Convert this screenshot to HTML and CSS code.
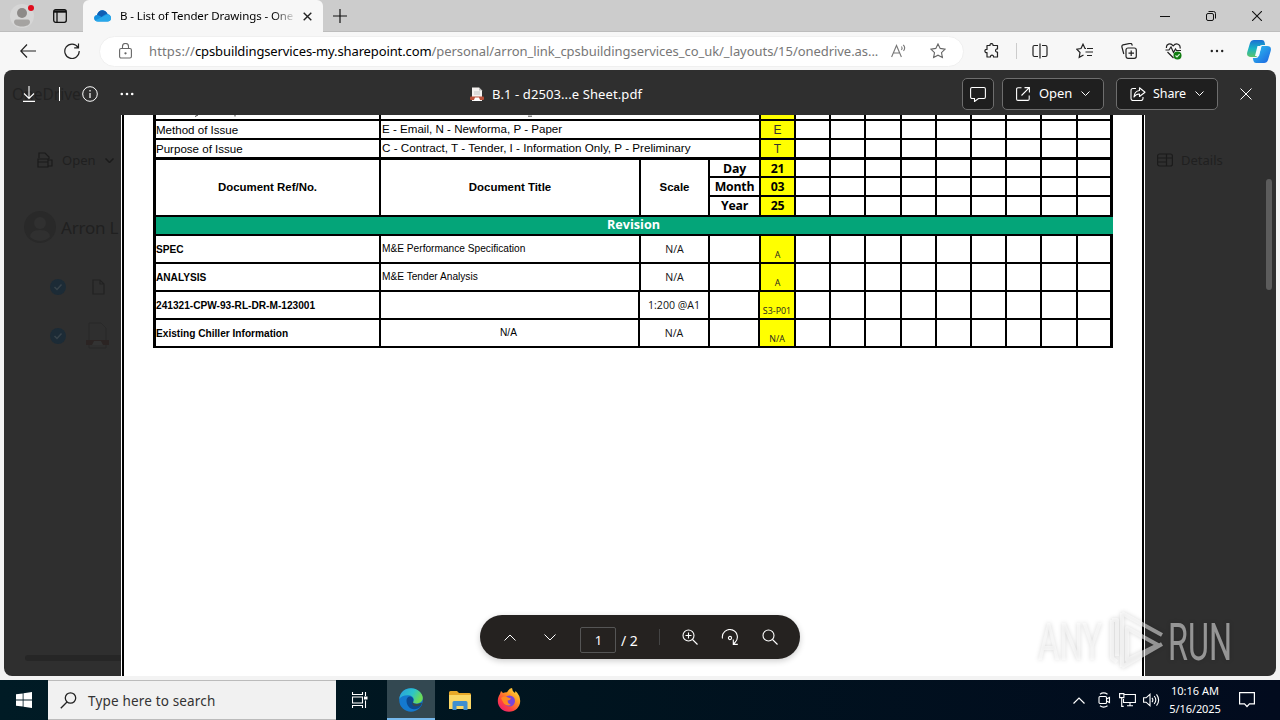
FILE: index.html
```
<!DOCTYPE html>
<html lang="en">
<head>
<meta charset="utf-8">
<title>B - List of Tender Drawings - OneDrive</title>
<link rel="stylesheet" href="styles.css">
</head>
<body>
<header class="tabstrip">
  <div class="profile"><svg width="18" height="20" viewBox="0 0 18 20"><circle cx="9" cy="6" r="5" fill="#8d8a88"/><path d="M1 15c0-2 1.500-2.500 3-2.500h10c1.500 0 3 .5 3 2.500 0 3-4 4.500-8 4.500S1 18 1 15z" fill="#a5a3a1"/></svg><i class="dot"></i></div>
  <svg class="tabs-icon" width="14" height="14" viewBox="0 0 14 14" fill="none" stroke="#111" stroke-width="1.300"><rect x=".7" y=".7" width="12.600" height="12.600" rx="2"/><path d="M1 2.500h12" stroke-width="2.400"/><path d="M4 3v10"/></svg>
  <div class="tab">
    <svg width="17" height="12" viewBox="0 0 17 12"><path d="M3 5C4 1 8-1 11 1c1.500 1 2 2 2.500 3C16 4.500 17 6 17 8c0 2-1.500 3.500-3.500 3.500H4C1.500 11.500 0 10 0 8c0-1.500 1-3 3-3z" fill="#1490df"/><path d="M3 5C4 1 8-1 11 1c1.500 1 2 2 2.500 3-3 0-4 1.500-6 3C6 6 5 5 3 5z" fill="#0f5fb4"/><path d="M1 10.500L13 4.500c3 .5 4 2 4 4 0 1.800-1.500 3-3.500 3H4c-1.300 0-2.300-.4-3-1z" fill="#28a8ea"/></svg>
    <span class="tab-title">B - List of Tender Drawings - One</span>
    <svg width="9" height="9" viewBox="0 0 9 9" stroke="#222" stroke-width="1.400"><path d="M.7.7l7.600 7.600M8.300.7L.7 8.300"/></svg>
  </div>
  <svg class="plus" width="14" height="14" viewBox="0 0 14 14" stroke="#111" stroke-width="1.200"><path d="M7 0v14M0 7h14"/></svg>
  <div class="winctl">
    <svg width="10" height="10" viewBox="0 0 10 10" stroke="#111"><path d="M0 5.500h10"/></svg>
    <svg width="10" height="10" viewBox="0 0 10 10" stroke="#111" fill="none"><rect x=".5" y="2.500" width="7" height="7" rx="1.500"/><path d="M2.500.5h5a2 2 0 0 1 2 2v5"/></svg>
    <svg width="10" height="10" viewBox="0 0 10 10" stroke="#111" stroke-width="1.100"><path d="M0 0l10 10M10 0L0 10"/></svg>
  </div>
</header>

<div class="toolbar">
  <svg class="back" width="16" height="14" viewBox="0 0 16 14" fill="none" stroke="#222" stroke-width="1.200"><path d="M7 .5L.8 7 7 13.500M1 7h15"/></svg>
  <svg class="reload" width="16" height="16" viewBox="0 0 16 16" fill="none" stroke="#222" stroke-width="1.200"><path d="M14 4.300A7.200 7.200 0 1 0 15.200 8M14.500.5v4.300h-4.300"/></svg>
  <div class="address">
    <svg width="13" height="16" viewBox="0 0 13 16" fill="none" stroke="#666" stroke-width="1.100"><rect x=".6" y="5.500" width="11.800" height="9.500" rx="1.500"/><path d="M3.500 5.500V3.500a3 3 0 0 1 6 0v2"/><circle cx="6.500" cy="10.300" r=".6" fill="#666"/></svg>
    <span class="url"><span class="scheme">https://</span><span class="host">cpsbuildingservices-my.sharepoint.com</span><span>/personal/arron_link_cpsbuildingservices_co_uk/_layouts/15/onedrive.as...</span></span>
    <svg class="read" width="16" height="14" viewBox="0 0 16 14" fill="none" stroke="#777" stroke-width="1.100"><path d="M.6 13L5.500 1.500 10.400 13M2.300 9h6.400M10.500 2.500q1.300 1.500 0 3.500M12.200.8q2.800 2.800.3 6"/></svg>
    <svg class="fav" width="16" height="16" viewBox="0 0 16 16" fill="none" stroke="#666" stroke-width="1.100"><path d="M8 .9l2.200 4.500 4.900.7-3.600 3.500.9 4.900L8 12.200l-4.400 2.300.9-4.900L.9 6.100l4.900-.7z"/></svg>
  </div>
  <div class="tools">
    <svg width="16" height="16" viewBox="0 0 16 16" fill="none" stroke="#222" stroke-width="1.200"><path d="M3 2.500h3c-.5-2.600 3.500-2.600 3 0h4.500V6c-2.600-.5-2.600 3.500 0 3v5H9.500c.5-2.600-3.500-2.600-3 0H3V9.500c-2.800.5-2.800-3.500 0-3z" stroke-linejoin="round"/></svg>
    <i class="vbar"></i>
    <svg width="16" height="16" viewBox="0 0 16 16" fill="none" stroke="#222" stroke-width="1.200"><path d="M6 2.500H2.500Q1 2.500 1 4v8q0 1.500 1.500 1.500H6M10 2.500h3.500Q15 2.500 15 4v8q0 1.500-1.500 1.500H10M8 .5v15"/></svg>
    <svg width="17" height="16" viewBox="0 0 17 16" fill="none" stroke="#222" stroke-width="1.200"><path d="M10 5.500H9L7 1.200 5 5.500l-4.300.7L4 9.500l-.8 4.800L7.500 12M11 5.500h6M9.500 9h7.500M11 12.500h5"/></svg>
    <svg width="16" height="16" viewBox="0 0 16 16" fill="none" stroke="#222" stroke-width="1.200"><rect x="5" y="5" width="10.300" height="10.300" rx="2"/><path d="M10.200 7.500v5.500M7.500 10.200H13M2.800 11L.9 4Q.6 2.300 2 1.900l7-1.500q1.500-.2 2 1.200l.3 1"/></svg>
    <svg width="17" height="17" viewBox="0 0 17 17" fill="none" stroke="#222" stroke-width="1.200"><path d="M.5 7H4l2-3 2.500 5.500L10.500 6l1 1.500H16M1.500 5C.8 1 5.500-.5 8.200 2.800 11-.5 16 1 15 5.500M2.500 9l6 6"/><circle cx="12.500" cy="12.500" r="4" fill="#107c10" stroke="none"/><path d="M10.500 12.500l1.500 1.400 2.600-2.700" stroke="#d9f2d9"/></svg>
    <svg width="14" height="4" viewBox="0 0 14 4" fill="#222"><circle cx="1.800" cy="2" r="1.200"/><circle cx="7" cy="2" r="1.200"/><circle cx="12.200" cy="2" r="1.200"/></svg>
    <svg class="copilot" width="24" height="23" viewBox="0 0 24 23"><defs><linearGradient id="ca" x1="0" y1="0" x2="0" y2="1"><stop offset="0" stop-color="#1a6fd4"/><stop offset=".5" stop-color="#18b3c4"/><stop offset="1" stop-color="#5cc46a"/></linearGradient><linearGradient id="cb" x1="0" y1="0" x2="1" y2="1"><stop offset="0" stop-color="#2ec6f0"/><stop offset="1" stop-color="#1d62e0"/></linearGradient></defs><path d="M7 0h8q2 0 2.500 2l.7 3H15q-2 0-2.700 2L9.500 17H4q-5 0-3.700-5L3 3Q4 0 7 0z" fill="url(#ca)"/><path d="M17 23H9q-2 0-2.500-2l-.7-3H9q2 0 2.700-2L14.500 6H20q5 0 3.700 5L21 20q-1 3-4 3z" fill="url(#cb)"/><path d="M10.500 6h4L12 16H8z" fill="#f4fbff"/></svg>
  </div>
</div>

<main class="viewer">
  <div class="viewer-bar">
    <span class="ghost brand">OneDrive</span>
    <div class="bar-left">
      <svg width="12" height="16" viewBox="0 0 12 16" fill="none" stroke="#fff" stroke-width="1.100"><path d="M6 0v12.500M1 7.500l5 5 5-5M0 15.400h12"/></svg>
      <i class="sep"></i>
      <svg width="16" height="16" viewBox="0 0 16 16" fill="none" stroke="#fff"><circle cx="8" cy="8" r="7.300"/><path d="M8 7v5M8 4v1.500" stroke-width="1.200"/></svg>
      <svg width="14" height="4" viewBox="0 0 14 4" fill="#fff"><circle cx="1.800" cy="2" r="1.300"/><circle cx="7" cy="2" r="1.300"/><circle cx="12.200" cy="2" r="1.300"/></svg>
    </div>
    <div class="filename">
      <svg width="14" height="15" viewBox="0 0 14 15"><path d="M2 .5h7l3 3V14H2z" fill="#f4f1ef"/><path d="M9 .5v3h3z" fill="#bbb"/><path d="M4 5h6M4 7h6" stroke="#c4c4c4"/><rect y="9.500" width="14" height="3.500" rx="1" fill="#b9513a"/><path d="M3.500 14l1.500-3.500h4l1.500 3.500z" fill="#fff"/></svg>
      <span>B.1 - d2503...e Sheet.pdf</span>
    </div>
    <div class="bar-right">
      <div class="btn icon"><svg width="16" height="16" viewBox="0 0 16 16" fill="none" stroke="#fff" stroke-width="1.100"><path d="M2 1.500h12q1.400 0 1.400 1.400v8.200q0 1.400-1.400 1.400H8.500L4.500 15.500v-3H2Q.6 12.500.6 11.100V2.900Q.6 1.500 2 1.500z"/></svg></div>
      <div class="btn open"><svg width="14" height="14" viewBox="0 0 14 14" fill="none" stroke="#fff" stroke-width="1.100"><path d="M5.500.8H2Q.6.8.6 2.200V12q0 1.400 1.400 1.400h9.800q1.400 0 1.400-1.400V8.500M8.500.6h4.900v4.900M13.300.7L5.500 8.500"/></svg><span>Open</span><svg width="9" height="5" viewBox="0 0 9 5" fill="none" stroke="#fff"><path d="M.5.5l4 4 4-4"/></svg></div>
      <div class="btn share"><svg width="16" height="14" viewBox="0 0 16 14" fill="none" stroke="#fff" stroke-width="1.100"><path d="M6 1.500H3Q1 1.500 1 3.500v8q0 2 2 2h8q2 0 2-2V10M9.500.8l5.500 4.400-5.500 4.300V7Q6 6.800 4 10q.3-5.800 5.500-6.500z" stroke-linejoin="round"/></svg><span>Share</span><svg width="9" height="5" viewBox="0 0 9 5" fill="none" stroke="#fff"><path d="M.5.5l4 4 4-4"/></svg></div>
      <svg class="close" width="12" height="12" viewBox="0 0 12 12" stroke="#fff"><path d="M.5.5l11 11M11.500.5l-11 11"/></svg>
    </div>
  </div>

  <div class="stage">
    <aside class="left">
      <div class="ghost card-open"><svg width="16" height="16" viewBox="0 0 16 16" fill="none" stroke="#1b1b1b" stroke-width="1.200"><path d="M2 6V1h6l4 4v2M1 7h10v8H1zM1 10h10M11 8h4v6h-4"/></svg><span>Open</span><svg width="9" height="5" viewBox="0 0 9 5" fill="none" stroke="#1b1b1b" stroke-width="1.500"><path d="M.5.5l4 4 4-4"/></svg></div>
      <div class="ghost owner"><svg width="32" height="32" viewBox="0 0 32 32"><circle cx="16" cy="16" r="16" fill="#292929"/><circle cx="16" cy="12" r="6" fill="#303030"/><path d="M6 26q0-7 10-7t10 7q-10 8-20 0z" fill="#303030"/></svg><span>Arron L</span></div>
      <div class="file-row first"><svg width="16" height="16" viewBox="0 0 16 16" fill="none"><circle cx="8" cy="8" r="8" fill="#1c2b36"/><path d="M4.500 8l2.500 2.500 4.500-5" stroke="#38434a" stroke-width="1.500"/></svg><svg width="13" height="16" viewBox="0 0 13 16" fill="none" stroke="#222" stroke-width="1.200"><path d="M1 1h7l4 4v10H1zM8 1v4h4"/></svg></div>
      <div class="file-row"><svg width="16" height="16" viewBox="0 0 16 16" fill="none"><circle cx="8" cy="8" r="8" fill="#1c2b36"/><path d="M4.500 8l2.500 2.500 4.500-5" stroke="#38434a" stroke-width="1.500"/></svg><svg width="23" height="27" viewBox="0 0 23 27" fill="none"><path d="M3 1h12l5 5v20H3z" stroke="#292929"/><path d="M0 18h23v5H0z" fill="#2b2423"/><path d="M6 23l2-4h7l2 4z" fill="#333"/></svg></div>
      <div class="hscroll"></div>
    </aside>

    <section class="page">
      <div class="sheet">
        <div class="grid top">
          <div class="cut"><svg width="100" height="3" viewBox="0 0 100 3" stroke="#444"><path d="M42 0l-3 1.500M79 0v1.500"/></svg></div><div class="span3 cut"><svg width="200" height="3" viewBox="0 0 200 3" stroke="#555"><path d="M147 1.200h4"/></svg></div><div class="y"></div><div></div><div></div><div></div><div></div><div></div><div></div><div></div><div></div><div></div>
          <div class="big">Method of Issue</div><div class="span3 big wide">E - Email, N - Newforma, P - Paper</div><div class="y mid">E</div><div></div><div></div><div></div><div></div><div></div><div></div><div></div><div></div><div></div>
          <div class="big">Purpose of Issue</div><div class="span3 big wide contract">C - Contract, T - Tender, I - Information Only, P - Preliminary</div><div class="y mid">T</div><div></div><div></div><div></div><div></div><div></div><div></div><div></div><div></div><div></div>
        </div>
        <div class="grid dates">
          <div class="head">Document Ref/No.</div><div class="head">Document Title</div><div class="head">Scale</div>
          <div class="date">Day</div><div class="date y">21</div><div></div><div></div><div></div><div></div><div></div><div></div><div></div><div></div><div></div>
          <div class="date">Month</div><div class="date y">03</div><div></div><div></div><div></div><div></div><div></div><div></div><div></div><div></div><div></div>
          <div class="date">Year</div><div class="date y">25</div><div></div><div></div><div></div><div></div><div></div><div></div><div></div><div></div><div></div>
        </div>
        <div class="revision">Revision</div>
        <div class="grid docs">
          <div class="ref">SPEC</div><div class="title">M&amp;E Performance Specification</div><div class="scale">N/A</div><div></div><div class="y rev">A</div><div></div><div></div><div></div><div></div><div></div><div></div><div></div><div></div><div></div>
          <div class="ref">ANALYSIS</div><div class="title">M&amp;E Tender Analysis</div><div class="scale">N/A</div><div></div><div class="y rev">A</div><div></div><div></div><div></div><div></div><div></div><div></div><div></div><div></div><div></div>
          <div class="ref">241321-CPW-93-RL-DR-M-123001</div><div class="short"></div><div class="scale nudge">1:200 @A1</div><div class="short"></div><div class="y rev nudge">S3-P01</div><div></div><div></div><div></div><div></div><div></div><div></div><div></div><div></div><div></div>
          <div class="ref">Existing Chiller Information</div><div class="title center short">N/A</div><div class="scale nudge">N/A</div><div class="short"></div><div class="y rev nudge">N/A</div><div></div><div></div><div></div><div></div><div></div><div></div><div></div><div></div><div></div>
        </div>
      </div>
    </section>

    <aside class="right">
      <div class="ghost details"><svg width="16" height="14" viewBox="0 0 16 14" fill="none" stroke="#1b1b1b" stroke-width="1.200"><rect x=".6" y="1" width="14.800" height="12" rx="2"/><path d="M9.500 1v12M1 5h14M1 9h8"/></svg><span>Details</span></div>
      <div class="vscroll"></div>
    </aside>
  </div>

  <div class="pill">
    <svg width="12" height="7" viewBox="0 0 12 7" fill="none" stroke="#fff"><path d="M.5 6.500L6 1l5.500 5.500"/></svg>
    <svg width="12" height="7" viewBox="0 0 12 7" fill="none" stroke="#fff"><path d="M.5.5L6 6 11.500.5"/></svg>
    <span class="pageno">1</span><span class="total">/ 2</span><i class="psep"></i>
    <svg width="16" height="16" viewBox="0 0 16 16" fill="none" stroke="#fff" stroke-width="1.100"><circle cx="6.500" cy="6.500" r="5.500"/><path d="M10.500 10.500l5 5M6.500 3.500v6M3.500 6.500h6"/></svg>
    <svg width="18" height="17" viewBox="0 0 18 17" fill="none" stroke="#fff" stroke-width="1.100"><path d="M1.500 9.500A7.500 7.500 0 1 1 14 13.500l-1.500 1.500M12.300 10.500V15.400h4.500"/><circle cx="9" cy="9" r="1.600"/></svg>
    <svg width="16" height="16" viewBox="0 0 16 16" fill="none" stroke="#fff" stroke-width="1.100"><circle cx="6.500" cy="6.500" r="5.500"/><path d="M10.500 10.500l5 5"/></svg>
  </div>
</main>

<footer class="taskbar">
  <div class="start"><svg width="16" height="16" viewBox="0 0 16 16" fill="#fff"><path d="M0 2.300L6.700 1.400v6.200H0zM7.500 1.300L16 0v7.600H7.500zM0 8.400h6.700v6.200L0 13.700zM7.500 8.400H16V16l-8.500-1.300z"/></svg></div>
  <div class="search"><svg width="17" height="17" viewBox="0 0 17 17" fill="none" stroke="#222" stroke-width="1.300"><circle cx="10.500" cy="6" r="5.200"/><path d="M7 10L.8 16.200"/></svg><span>Type here to search</span></div>
  <div class="task"><svg width="16" height="16" viewBox="0 0 16 16" fill="none" stroke="#fff" stroke-width="1.100"><path d="M.5 0v2.500h10V0M.5 16v-2.500h10V16M.5 5h10v6H.5zM13.500 0v4M13.500 8.500V16"/><path d="M12 4.500h3.500v3H12z" fill="#fff" stroke="none"/></svg></div>
  <div class="task active"><svg width="24" height="24" viewBox="0 0 24 24"><defs><linearGradient id="ea" x1="0" y1="0" x2="1" y2=".4"><stop offset="0" stop-color="#2a9de0"/><stop offset=".6" stop-color="#2cc4c8"/><stop offset="1" stop-color="#6bdb55"/></linearGradient></defs><circle cx="12" cy="12" r="11.800" fill="#1479cf"/><path d="M.3 11C1 4 6 .2 12 .2S24 5 23.800 10c-.2 4-3.500 5.500-6.800 5.500-3 0-3.500-1-2.500-2.500C15.500 11 14 7.500 9.500 7.200 5 7 1.500 8.500.3 11z" fill="url(#ea)"/><path d="M7.500 12.500c0-2 1-3.500 3-4 3 0 4.500 2.500 3.800 4.500-1 2 .2 3 3.500 3 2 0 4-.7 4.800-1.500 1 2.500-2.500 7-7.600 6.800-4.500 0-7.500-4.300-7.500-8.800z" fill="#0c4a91"/><path d="M14.300 13c-1 2 .2 3 3.500 3 2 0 4-.7 4.800-1.200.5 1-1.600 3-4.600 3.500-4 .5-6-2.300-3.700-5.300z" fill="#36474d"/></svg></div>
  <div class="task"><svg width="22" height="19" viewBox="0 0 22 19"><path d="M0 1.500Q0 0 1.500 0H8l2 2h10.500Q22 2 22 3.500V18H0z" fill="#e8a828"/><path d="M0 4h22v14H0z" fill="#fbd766"/><path d="M3.500 19V11.500Q3.500 10 5 10h12q1.500 0 1.500 1.500V19h-4v-4h-7v4z" fill="#3f8fd0"/></svg></div>
  <div class="task"><svg width="24" height="24" viewBox="0 0 24 24"><defs><linearGradient id="fa" x1="1" y1="0" x2=".2" y2="1"><stop offset="0" stop-color="#fff04a"/><stop offset=".4" stop-color="#ff9a22"/><stop offset=".75" stop-color="#ff4040"/><stop offset="1" stop-color="#e81f75"/></linearGradient></defs><path d="M3 6l1-3 2 2q2-1 4-.8Q12 .5 15 0q0 3 3 5l.5-2Q23 7 23.200 13c0 6-5 10.800-11.200 10.800S.8 19 .8 13c0-3 .8-5 2.200-7z" fill="url(#fa)"/><circle cx="12.500" cy="13" r="5.500" fill="#7a45d8"/><path d="M4 10q4-2.500 7-.5l3 1q-1 2-3.500 2 0 3 3.500 4.500Q8 18.500 6 14z" fill="#ff8a20"/></svg></div>
  <div class="tray">
    <svg width="12" height="7" viewBox="0 0 12 7" fill="none" stroke="#fff" stroke-width="1.200"><path d="M.5 6.500L6 1l5.500 5.500"/></svg>
    <svg width="13" height="16" viewBox="0 0 13 16" fill="none" stroke="#fff" stroke-width="1.100"><rect x="1" y="4.500" width="7.500" height="7" rx="1"/><path d="M8.500 7l3-1.500v5L8.500 9M2 2.200Q5.500-.5 9.500 2.200M2 13.800q3.500 2.700 7.500 0"/></svg>
    <svg width="17" height="14" viewBox="0 0 17 14" fill="none" stroke="#fff" stroke-width="1.100"><path d="M5.500 1.500h10.900v8H4.500V6M8 12.800h6M11 9.500v3M.6.600h4.300v4H.6zM2.700 4.600v8.800h2"/></svg>
    <svg width="17" height="14" viewBox="0 0 17 14" fill="none" stroke="#fff" stroke-width="1.100"><path d="M.6 4.800h2.500L7 1.300v11.400L3.100 9.200H.6zM9 4.800q1.700 2.200 0 4.400M11.200 3q3.200 4 0 8M13.500 1.300q4.300 5.700 0 11.400"/></svg>
    <div class="clock"><span>10:16 AM</span><span class="date2">5/16/2025</span></div>
    <svg class="note" width="16" height="16" viewBox="0 0 16 16" fill="none" stroke="#fff" stroke-width="1.200"><path d="M.6.600h14.800v11.200H10.500L8 14.500 5.500 11.800H.6z"/></svg>
  </div>
</footer>

<svg class="watermark" width="220" height="70" viewBox="1030 606 220 70">
  <g class="wm-text"><text x="1038" y="660" textLength="64" lengthAdjust="spacingAndGlyphs">ANY</text><text x="1168" y="660" textLength="64" lengthAdjust="spacingAndGlyphs">RUN</text></g>
  <g class="wm-logo"><path d="M1122 613v54M1122 613l40 22M1122 667l40-23M1112 620v38l5 4M1127 628l31 17-31 15zM1112 620h5v36"/></g>
</svg>
</body>
</html>
```

FILE: styles.css
```
* { box-sizing: border-box; }
body { margin: 0; width: 1280px; height: 720px; overflow: hidden; display: flex; flex-direction: column; position: relative; background: #f3f3f3; font-family: "Noto Sans", sans-serif; color: #000; }
svg { display: block; flex: none; }
span { white-space: nowrap; }

.tabstrip { height: 32px; flex: none; display: flex; align-items: center; background: #ccc; border-bottom: 1px solid #bdbdbd; }
.profile { position: relative; width: 24px; height: 24px; margin-left: 10px; padding: 3px; border-radius: 50%; background: #d6d6d6; }
.dot { position: absolute; left: 18px; top: 1px; width: 6px; height: 6px; border-radius: 50%; background: #e00b1c; }
.tabs-icon { margin-left: 19px; }
.tab { display: flex; align-items: center; width: 240px; height: 32px; margin-left: 16px; padding: 0 11px; background: #f7f7f7; border-radius: 6px 6px 0 0; align-self: flex-start; }
.tab-title { width: 174px; margin: 0 9px -1px 9px; overflow: hidden; font-size: 11.5px; letter-spacing: -.1px; background: linear-gradient(90deg, #000 88%, #ddd 100%); -webkit-background-clip: text; background-clip: text; color: transparent; }
.tab-title { padding-bottom: 2px; }
.plus { margin-left: 10px; }
.winctl { display: flex; gap: 36px; margin-left: auto; padding-right: 18px; }

.toolbar { height: 38px; flex: none; display: flex; align-items: center; background: #f7f7f7; }
.back { margin-left: 20px; }
.reload { margin-left: 28px; }
.address { display: flex; align-items: center; width: 865px; height: 31px; margin-left: 19px; padding-left: 19px; border-radius: 16px; background: #fff; border: 1px solid #f0f0f0; }
.url { width: 728px; margin-left: 17px; font-size: 13px; letter-spacing: -.05px; color: #777; }
.scheme { letter-spacing: .15px; }
.host { color: #000; letter-spacing: -.12px; }
.read { margin-left: 14px; }
.fav { margin-left: 23px; }
.tools { display: flex; align-items: center; flex: 1; padding: 0 5px 0 20px; gap: 28px; }
.vbar { width: 1px; height: 16px; margin: 0 -13px 0 -12px; background: #ccc; }
.copilot { margin-left: -5px; }

.viewer { position: relative; height: 606px; margin: 0 4px 4px; flex: none; display: flex; flex-direction: column; overflow: hidden; border-radius: 8px; background: #2f2f2f; }
.viewer-bar { position: relative; height: 45px; flex: none; display: flex; align-items: center; padding-top: 2px; font-size: 13px; color: #fff; }
.ghost { color: #202020; }
.brand { position: absolute; left: 8px; top: 13px; font-size: 15.500px; line-height: 22px; color: #222; }
.bar-left { position: relative; display: flex; align-items: center; width: 466px; padding-left: 19px; }
.sep { width: 1px; height: 14px; margin: 0 22px 0 24px; background: #fff; }
.bar-left svg:last-child { margin-left: 22px; }
.filename { display: flex; align-items: center; gap: 8px; letter-spacing: .1px; }
.filename svg { margin-top: 1px; }
.bar-right { display: flex; align-items: center; margin-left: auto; padding-right: 24px; }
.btn { display: flex; align-items: center; height: 32px; border: 1px solid #6e6e6e; border-radius: 5px; background: #1f1f1f; }
.icon { width: 32px; padding-left: 7px; }
.open { width: 102px; margin-left: 8px; padding-left: 13px; }
.share { width: 102px; margin: 0 22px 0 12px; padding-left: 13px; }
.btn span { margin: 0 9px 1px 9px; width: 33px; letter-spacing: -.1px; }
.share span { font-size: 12.500px; margin-left: 7px; }

.stage { flex: 1; display: flex; min-height: 0; }
.left { width: 117px; flex: none; display: flex; flex-direction: column; padding-left: 20px; overflow: hidden; }
.card-open { display: flex; align-items: center; gap: 9px; height: 60px; margin: 15px 0 0 -5px; padding-left: 18px; font-size: 13px; }
.owner { display: flex; align-items: center; gap: 5px; height: 32px; margin-top: 21px; font-size: 17px; letter-spacing: -.2px; }
.file-row { display: flex; align-items: center; gap: 20px; height: 49px; margin-left: 4px; padding-left: 22px; }
.file-row.first { gap: 26px; margin-top: 19px; }
.hscroll { height: 6px; margin: auto 0 15px 1px; background: #262626; flex: none; border-radius: 3px 0 0 3px; }

.page { width: 1024px; flex: none; padding: 0 31px 0 30px; background: linear-gradient(90deg, #fff 1px, #000 1px, #000 3px, #fff 3px, #fff 1021px, #000 1021px, #000 1023px, #fff 1023px); }
.sheet { width: 960px; margin-left: 2px; background: #000; font-family: "Liberation Sans", Arial, sans-serif; }
.grid { display: grid; grid-template-columns: 223px 258px 67px 49px 33px 33px 33px 34px 33px 33px 33px 33px 34px 32px; gap: 2px; padding: 0 3px; }
.grid > div { background: #fff; overflow: hidden; white-space: nowrap; }
.top { grid-template-rows: 4px 17px 17px; }
.span3 { grid-column: span 3; }
.grid > .y { background: #ff0; text-align: center; }
.big { font-size: 11.550px; line-height: 18px; }
.wide { font-size: 11.600px; line-height: 16px; padding-left: 1px; }
.contract { font-size: 11.670px; }
.mid { font-size: 12px; line-height: 19px; color: #333; }
.dates { grid-template-rows: 16px 17px 18px; margin-top: 3px; }
.head { grid-row: span 3; text-align: center; font: bold 11.450px/54px "Liberation Sans", sans-serif; }
.date { text-align: center; font: bold 12.300px/18px "Open Sans", sans-serif; letter-spacing: -.2px; }
.revision { height: 17px; margin: 2px 0 2px 3px; padding-right: 2px; background: #04a579; color: #fff; text-align: center; font: bold 12.600px/16px "Open Sans", sans-serif; }
.docs { grid-auto-rows: 26px; padding-bottom: 2px; }
.ref { font-size: 10.130px; font-weight: 700; line-height: 27px; }
.title { font-size: 10.170px; line-height: 25px; padding-left: 1px; }
.title.center { text-align: center; padding-right: 3px; }
.scale { text-align: center; font: 10.600px/27px "Open Sans", sans-serif; color: #111; }
.rev { font: 8.900px/38px "Open Sans", sans-serif; color: #222; }
.short { margin-right: 1px; }
.nudge { margin-left: -1px; }

.right { flex: 1; display: flex; justify-content: space-between; padding-left: 12px; }
.details { display: flex; align-items: center; gap: 8px; height: 90px; font-size: 13px; }
.vscroll { width: 6px; height: 111px; margin: 64px 4px 0 0; border-radius: 4px; background: #5c5c5c; }

.pill { position: absolute; left: 476px; top: 545px; width: 320px; height: 44px; display: flex; align-items: center; padding-left: 24px; border-radius: 22px; background: #252220; box-shadow: 0 2px 6px rgba(0,0,0,.2); color: #fff; font-size: 13px; }
.pill svg + svg { margin-left: 28px; }
.pill svg:nth-of-type(n+3) { margin-left: 23px; }
.pill svg:last-child { margin-left: 23px; }
.pageno { width: 36px; height: 26px; margin: 6px 0 0 24px; border: 1px solid #555; border-radius: 2px; text-align: center; line-height: 25px; padding-left: 1px; }
.total { margin: 6px 0 0 5px; width: 18px; font-size: 14px; }
.psep { width: 1px; height: 16px; margin-left: 20px; background: #444; }
.pill .psep + svg { margin-left: 22px; }

.taskbar { height: 40px; flex: none; display: flex; background: linear-gradient(90deg, #001b25, #00141f 45%, #020b1e); }
.start { width: 48px; display: flex; align-items: center; justify-content: center; }
.search { width: 288px; display: flex; align-items: center; gap: 11px; padding-left: 12px; background: #f1f1f1; border: 1px solid #bbb; border-width: 1px 0; font-size: 13.500px; color: #333; }
.search span { padding-top: 2px; letter-spacing: .17px; }
.task { width: 49px; display: flex; align-items: center; justify-content: center; }
.task:nth-of-type(3) { width: 51px; padding-right: 3px; }
.task.active { width: 48px; background: #334851; border-bottom: 2px solid #76b9ed; padding-top: 2px; }
.tray { display: flex; align-items: center; margin-left: auto; padding-right: 25px; color: #fff; }
.tray svg:nth-of-type(2) { margin-left: 13px; }
.tray svg:nth-of-type(3) { margin-left: 8px; }
.tray svg:nth-of-type(4) { margin-left: 7px; }
.clock { width: 62px; margin-left: 4px; display: flex; flex-direction: column; align-items: center; font-size: 11px; line-height: 18px; }
.clock .date2 { letter-spacing: -.1px; }
.tray .note { margin-left: 13px; }

.watermark { position: absolute; left: 1030px; top: 606px; filter: drop-shadow(0 0 2px rgba(0,0,0,.3)); }
.wm-text { fill: rgba(255,255,255,.5); font: 52px Roboto, sans-serif; }
.wm-logo { fill: none; stroke: rgba(255,255,255,.5); stroke-width: 4; stroke-linejoin: round; }
```
